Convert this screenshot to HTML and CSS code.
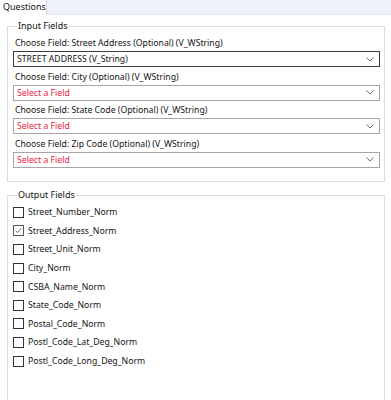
FILE: index.html
```html
<!DOCTYPE html>
<html>
<head>
<meta charset="utf-8">
<link rel="stylesheet" href="styles.css">
</head>
<body>
<div class="tabbar">
  <div class="tab">Questions</div>
</div>
<div class="content">
  <fieldset class="group input-group">
    <legend>Input Fields</legend>
    <div class="field">
      <div class="label">Choose Field: Street Address (Optional) (V_WString)</div>
      <div class="select focused"><span class="value">STREET ADDRESS (V_String)</span><svg class="chev" width="8" height="5" viewBox="0 0 8 5"><path d="M0.5 0.5 L4 4 L7.5 0.5" fill="none" stroke="#707070" stroke-width="1"/></svg></div>
    </div>
    <div class="field">
      <div class="label">Choose Field: City (Optional) (V_WString)</div>
      <div class="select"><span class="value placeholder">Select a Field</span><svg class="chev" width="8" height="5" viewBox="0 0 8 5"><path d="M0.5 0.5 L4 4 L7.5 0.5" fill="none" stroke="#707070" stroke-width="1"/></svg></div>
    </div>
    <div class="field">
      <div class="label">Choose Field: State Code (Optional) (V_WString)</div>
      <div class="select"><span class="value placeholder">Select a Field</span><svg class="chev" width="8" height="5" viewBox="0 0 8 5"><path d="M0.5 0.5 L4 4 L7.5 0.5" fill="none" stroke="#707070" stroke-width="1"/></svg></div>
    </div>
    <div class="field">
      <div class="label">Choose Field: Zip Code (Optional) (V_WString)</div>
      <div class="select"><span class="value placeholder">Select a Field</span><svg class="chev" width="8" height="5" viewBox="0 0 8 5"><path d="M0.5 0.5 L4 4 L7.5 0.5" fill="none" stroke="#707070" stroke-width="1"/></svg></div>
    </div>
  </fieldset>
  <fieldset class="group output-group">
    <legend>Output Fields</legend>
    <div class="row"><span class="box"></span><span>Street_Number_Norm</span></div>
    <div class="row"><span class="box checked"><svg width="11" height="11" viewBox="0 0 11 11"><path d="M2 5.5 L4.5 8 L9 2.5" fill="none" stroke="#555" stroke-width="1"/></svg></span><span>Street_Address_Norm</span></div>
    <div class="row"><span class="box"></span><span>Street_Unit_Norm</span></div>
    <div class="row"><span class="box"></span><span>City_Norm</span></div>
    <div class="row"><span class="box"></span><span>CSBA_Name_Norm</span></div>
    <div class="row"><span class="box"></span><span>State_Code_Norm</span></div>
    <div class="row"><span class="box"></span><span>Postal_Code_Norm</span></div>
    <div class="row"><span class="box"></span><span>Postl_Code_Lat_Deg_Norm</span></div>
    <div class="row"><span class="box"></span><span>Postl_Code_Long_Deg_Norm</span></div>
  </fieldset>
</div>
</body>
</html>
```
FILE: styles.css
```css
html, body {
  margin: 0;
  padding: 0;
  background: #ffffff;
  font-family: "Noto Sans", "Open Sans", sans-serif;
  font-size: 8.7px;
  color: #141414;
  height: 400px;
  overflow: hidden;
}
body {
  display: flex;
  flex-direction: column;
}
.tabbar {
  height: 15px;
  flex: none;
  background: #eff1fa;
  display: flex;
  border-bottom: 1px solid #e4e6ee;
  box-sizing: border-box;
}
.tab {
  width: 47px;
  height: 15px;
  background: #ffffff;
  border-right: 1px solid #d6d8e0;
  box-sizing: border-box;
  padding-left: 3px;
  line-height: 14px;
  font-size: 9px;
}
.content {
  flex: 1;
  min-height: 0;
  display: flex;
  flex-direction: column;
  padding: 5px 6px 0 7px;
}
.group {
  margin: 0;
  border: 1px solid #dedede;
  padding: 0 4px 0 5px;
  min-width: 0;
}
.group legend {
  padding: 0 1px;
  margin-left: 4px;
  line-height: 12px;
  font-size: 9px;
}
.input-group {
  flex: none;
  padding-top: 5px;
  padding-bottom: 10px;
}
.field {
  margin-bottom: 3.5px;
}
.label {
  line-height: 13px;
  padding-left: 2px;
  margin-bottom: 1px;
}
.select {
  height: 16px;
  border: 1px solid #a6a6a6;
  box-sizing: border-box;
  display: flex;
  align-items: center;
  justify-content: space-between;
  padding: 0 5px 0 3px;
}
.select.focused {
  border-color: #3c3c3c;
}
.value {
  line-height: 14px;
  color: #141414;
}
.value.placeholder {
  color: #f0203c;
}
.chev {
  display: block;
}
.output-group {
  flex: 1;
  min-height: 0;
  margin-top: 7px;
  padding-top: 2px;
  border-bottom: none;
}
.row {
  height: 18.6px;
  display: flex;
  align-items: center;
  gap: 4px;
}
.box {
  width: 11px;
  height: 11px;
  border: 1px solid #333333;
  box-sizing: border-box;
  display: flex;
  align-items: center;
  justify-content: center;
}
.box.checked {
  border-color: #555;
}
.box svg {
  display: block;
}
```
